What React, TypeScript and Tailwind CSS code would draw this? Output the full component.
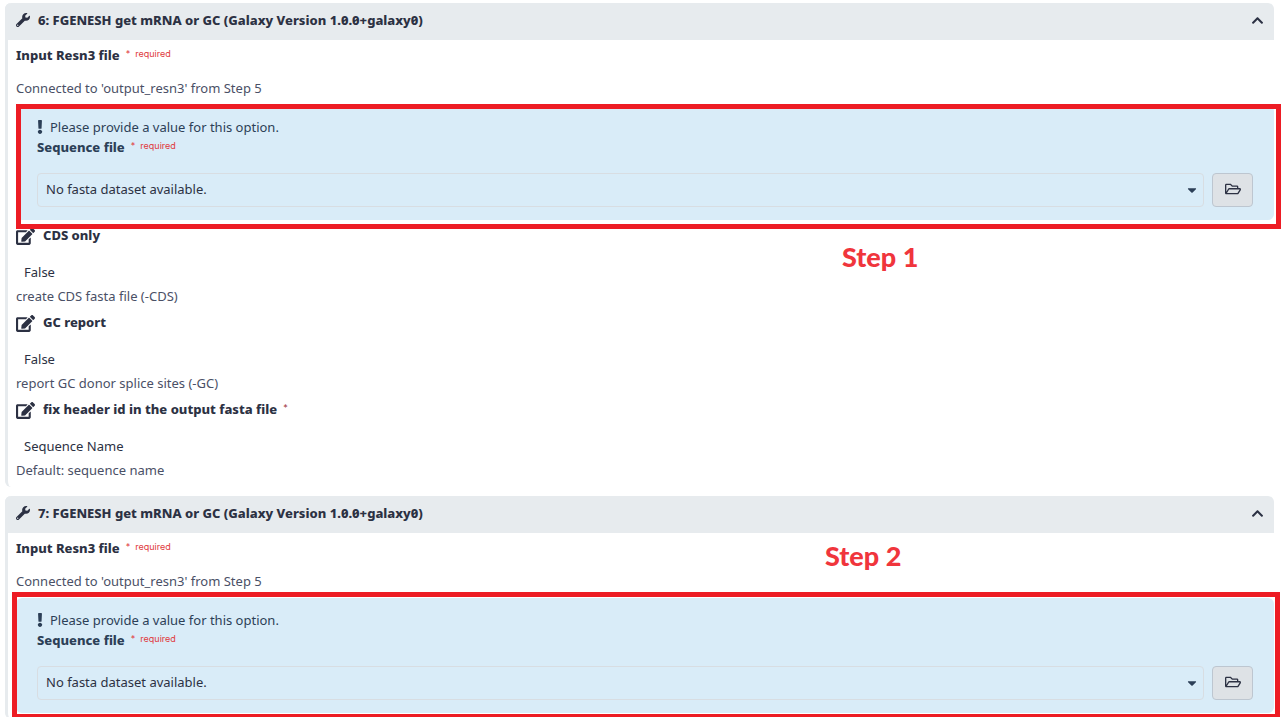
import { useId } from "react";
import {
  FaCaretDown,
  FaChevronUp,
  FaEdit,
  FaExclamation,
  FaRegFolderOpen,
  FaWrench,
} from "react-icons/fa";

type Parameter = { label: string; marker?: string; value: string; help: string };

const parameters: Parameter[] = [
  { label: "CDS only", value: "False", help: "create CDS fasta file (-CDS)" },
  { label: "GC report", value: "False", help: "report GC donor splice sites (-GC)" },
  {
    label: "fix header id in the output fasta file",
    marker: "*",
    value: "Sequence Name",
    help: "Default: sequence name",
  },
];

function Required() {
  return (
    <span className="ml-[6px] font-[Inter,sans-serif] text-[9px] leading-[18px] text-[#e0383c]">
      *&nbsp; required
    </span>
  );
}

function SequenceAlert() {
  const id = useId();
  return (
    <div className="rounded-md bg-[#d9ecf8] px-[21px] pt-3 pb-[13px] text-[#2c3f57]">
      <p className="flex h-5 items-center gap-2">
        <FaExclamation className="-mr-[5px] -ml-1 size-[14px]" />
        <span>Please provide a value for this option.</span>
      </p>
      <div className="flex h-5 items-start">
        <label htmlFor={id} className="font-extrabold">
          Sequence file
        </label>
        <Required />
      </div>
      <div className="mt-4 flex gap-2">
        <div className="relative grow">
          <select
            id={id}
            className="h-[34px] w-full appearance-none rounded-sm border border-[#d8dde2] bg-transparent px-2 pb-[2px] text-[#2c3143]"
          >
            <option>No fasta dataset available.</option>
          </select>
          <FaCaretDown className="pointer-events-none absolute top-[10px] right-[5px] size-[14px]" />
        </div>
        <button
          type="button"
          aria-label="Browse datasets"
          className="flex h-[34px] w-[41px] items-center justify-center rounded-sm border border-[#bdc6d0] bg-[#dee2e6] pb-[2px] text-[#2c3143]"
        >
          <FaRegFolderOpen className="size-4" />
        </button>
      </div>
    </div>
  );
}

function ParameterRow({ label, marker, value, help }: Parameter) {
  return (
    <div className="pt-[5px] pb-px">
      <div className="flex h-5 items-center">
        <button type="button" aria-label={`Edit ${label}`} className="mr-2 pt-[2px]">
          <FaEdit className="size-[19px]" />
        </button>
        <span className="font-extrabold">{label}</span>
        {marker && (
          <span className="ml-[6px] self-start font-[Inter,sans-serif] text-[9px] leading-[18px] text-[#a03a40]">
            {marker}
          </span>
        )}
      </div>
      <p className="mt-[17px] pl-2">{value}</p>
      <p className="mt-1 text-[#4a5066]">{help}</p>
    </div>
  );
}

type StepProps = {
  number: number;
  note: string;
  frameClass: string;
  noteClass: string;
  items?: Parameter[];
};

function Step({ number, note, frameClass, noteClass, items = [] }: StepProps) {
  return (
    <section className="rounded-md border-l-[3px] border-[#e7ebee] last:grow">
      <header className="-ml-[3px] flex h-[37px] items-center rounded-t-md bg-[#e7ebee] pr-[10px] pb-[3px] pl-[11px]">
        <FaWrench className="mr-2 size-[14px]" />
        <h2 className="grow font-extrabold slashed-zero">
          {number}: FGENESH get mRNA or GC (Galaxy Version 1.0.0+galaxy0)
        </h2>
        <button type="button" aria-label="Collapse step">
          <FaChevronUp className="size-[13px]" />
        </button>
      </header>
      <div className="pt-[5px] pb-[6px] pl-2">
        <div className="flex h-5 items-start">
          <span className="font-extrabold">Input Resn3 file</span>
          <Required />
        </div>
        <p className="mt-[13px] mb-[7px] text-[#4a5066]">Connected to 'output_resn3' from Step 5</p>
        <div className="relative">
          <SequenceAlert />
          <div className={`pointer-events-none absolute border-[5px] border-[#ed1c24] ${frameClass}`} />
          <strong className={`absolute font-[Lato,sans-serif] text-[27px] leading-8 font-black text-[#f0353c] ${noteClass}`}>
            {note}
          </strong>
        </div>
        {items.map((item) => (
          <ParameterRow key={item.label} {...item} />
        ))}
      </div>
    </section>
  );
}

export default function App() {
  return (
    <main className="flex min-h-screen flex-col gap-[9px] overflow-hidden bg-white pt-[3px] pr-2 pl-[5px] font-['Noto_Sans',sans-serif] text-[13px] leading-5 text-[#2c3143]">
      <Step
        number={6}
        note="Step 1"
        frameClass="-top-px left-0 -right-[7px] -bottom-[9px]"
        noteClass="top-[136px] left-[826px]"
        items={parameters}
      />
      <Step
        number={7}
        note="Step 2"
        frameClass="-top-[6px] -left-1 -right-[6px] -bottom-[6px]"
        noteClass="-top-[58px] left-[809px]"
      />
    </main>
  );
}
